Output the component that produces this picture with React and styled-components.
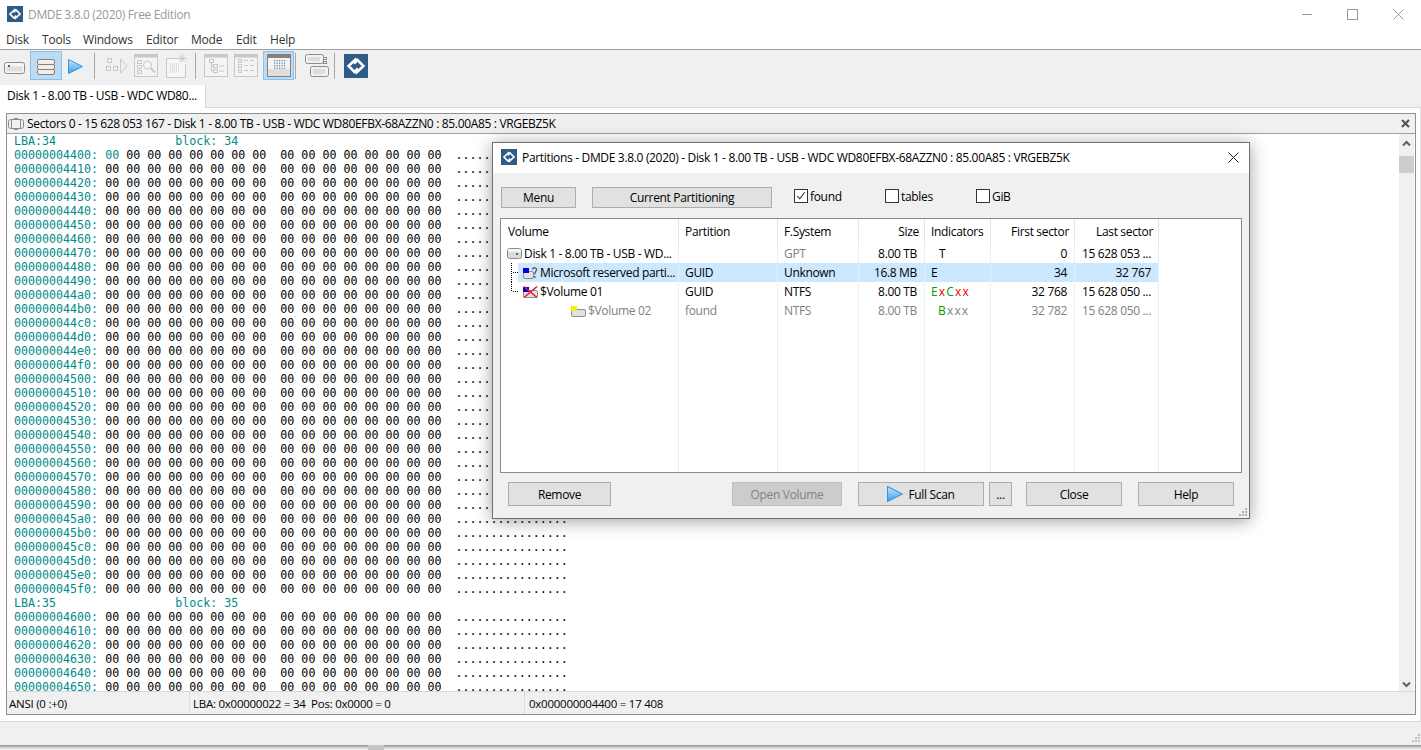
import React from 'react';
import styled, { createGlobalStyle } from 'styled-components';

const UI_FONT = '"Open Sans", "Noto Sans", "Liberation Sans", sans-serif';

const GlobalStyle = createGlobalStyle`
  html, body { margin: 0; padding: 0; background: #fff; }
  body { font-family: ${UI_FONT}; font-size: 12px; color: #000; }
`;

const Page = styled.div`
  position: relative;
  width: 1421px;
  height: 750px;
  overflow: hidden;
  display: flex;
  flex-direction: column;
  background: #fff;
  letter-spacing: -0.33px;
`;

const TitleBar = styled.div`
  height: 28px;
  display: flex;
  align-items: center;
  padding-left: 7px;
  gap: 5px;
  color: #999;
`;

const WindowButtons = styled.div`
  margin-left: auto;
  display: flex;
`;

const WindowButton = styled.div`
  width: 45.5px;
  height: 28px;
  display: flex;
  align-items: center;
  justify-content: center;
`;

const MenuBar = styled.div`
  height: 21px;
  box-sizing: border-box;
  padding: 2px 0 0 6px;
  display: flex;
  align-items: center;
  color: #333;
  letter-spacing: -0.2px;
`;

const MenuItem = styled.span`
  width: ${(p) => p.$w}px;
`;

const ToolBar = styled.div`
  height: 35px;
  border-top: 1px solid #a0a0a0;
  background: #f0f0f0;
  display: flex;
  align-items: flex-start;
  box-sizing: content-box;
  padding-left: 2px;
`;

const Tool = styled.div`
  width: ${(p) => p.$w}px;
  height: 29px;
  margin-top: 1px;
  padding-top: ${(p) => p.$shift || 0}px;
  box-sizing: border-box;
  display: flex;
  align-items: center;
  justify-content: center;
  ${(p) => p.$active && 'background: #bcdcf4; border: 1px solid #8cc0ea;'}
`;

const ToolSep = styled.div`
  width: 1px;
  height: 26px;
  margin: 3px ${(p) => p.$r}px 0 ${(p) => p.$l}px;
  background: #a8a8a8;
`;

const TabStrip = styled.div`
  height: 23px;
  background: #f0f0f0;
  border-bottom: 1px solid #d9d9d9;
  box-sizing: border-box;
  display: flex;
`;

const Tab = styled.div`
  width: 206px;
  height: 23px;
  background: #fff;
  border-right: 1px solid #d9d9d9;
  box-sizing: border-box;
  padding-left: 7px;
  line-height: 22px;
`;

const Workspace = styled.div`
  height: 613px;
  box-sizing: border-box;
  padding: 5px 4px 6px 6px;
  border-right: 1px solid #e2e2e2;
  display: flex;
`;

const Frame = styled.div`
  flex: 1;
  border: 1px solid #8f8f8f;
  display: flex;
  flex-direction: column;
  min-width: 0;
`;

const FrameHeader = styled.div`
  height: 20px;
  box-sizing: border-box;
  background: #f0f0f0;
  border-bottom: 1px solid #a0a0a0;
  display: flex;
  align-items: center;
  padding-left: 1px;
  gap: 3px;
`;

const FrameClose = styled.div`
  margin-left: auto;
  margin-right: 5px;
  display: flex;
`;

const FrameBody = styled.div`
  height: 557px;
  display: flex;
  overflow: hidden;
`;

const Hex = styled.div`
  flex: 1;
  overflow: hidden;
  padding-left: 7px;
  font-family: "DejaVu Sans Mono", "Liberation Mono", monospace;
  font-size: 11.65px;
  letter-spacing: 0;
  line-height: 14px;
  white-space: pre;
`;

const HexRow = styled.div`
  height: 14px;
`;

const Teal = styled.span`
  color: #008b8b;
`;

const ScrollBar = styled.div`
  width: 15px;
  margin-right: 1px;
  background: #f0f0f0;
  display: flex;
  flex-direction: column;
`;

const ScrollArrow = styled.div`
  height: ${(p) => p.$h}px;
  display: flex;
  align-items: ${(p) => (p.$down ? 'center' : 'flex-start')};
  justify-content: center;
  padding-top: ${(p) => (p.$down ? 0 : 6)}px;
  box-sizing: border-box;
`;

const ScrollThumb = styled.div`
  height: 17px;
  background: #cdcdcd;
`;

const ScrollSpace = styled.div`
  flex: 1;
`;

const FrameStatus = styled.div`
  flex: 1;
  background: #f0f0f0;
  border-top: 1px solid #d9d9d9;
  display: flex;
  align-items: center;
`;

const StatusCell = styled.div`
  width: ${(p) => p.$w}px;
  height: 100%;
  box-sizing: border-box;
  padding-left: ${(p) => p.$pad}px;
  display: flex;
  align-items: center;
  border-right: ${(p) => (p.$last ? 'none' : '1px solid #dcdcdc')};
  font-size: 11.5px;
  letter-spacing: -0.25px;
`;

const BottomBar = styled.div`
  height: 24px;
  border-top: 1px solid #d9d9d9;
  box-sizing: border-box;
  background: #f0f0f0;
  display: flex;
  justify-content: flex-end;
  align-items: flex-end;
  padding-bottom: 2px;
`;

const BottomShade = styled.div`
  flex: 1;
  background: linear-gradient(#8c8c8c, #dedede 60%, #f2f2f2);
  display: flex;
`;

const ShadeNotch = styled.div`
  width: 16px;
  margin-left: 368px;
  background: #c4c4c4;
`;

/* partitions window, floats over the hex view */
const Dialog = styled.div`
  position: absolute;
  left: 492px;
  top: 142px;
  width: 758px;
  height: 377px;
  box-sizing: border-box;
  border: 1px solid #6f6f6f;
  background: #f0f0f0;
  box-shadow: 0 2px 16px rgba(0, 0, 0, 0.38);
  display: flex;
  flex-direction: column;
`;

const DialogTitle = styled.div`
  height: 30px;
  box-sizing: border-box;
  padding: 0 0 2px 8px;
  background: #fff;
  display: flex;
  align-items: center;
  gap: 5px;
  flex-shrink: 0;
`;

const DialogClose = styled.div`
  margin-left: auto;
  margin-right: 10px;
  display: flex;
`;

const Options = styled.div`
  display: flex;
  align-items: flex-start;
  padding: 14px 0 10px 8px;
`;

const Button = styled.div`
  width: ${(p) => p.$w}px;
  height: ${(p) => p.$h || 24}px;
  margin-left: ${(p) => p.$ml || 0}px;
  box-sizing: border-box;
  border: 1px solid ${(p) => (p.$disabled ? '#bfbfbf' : '#adadad')};
  background: ${(p) => (p.$disabled ? '#cccccc' : '#e1e1e1')};
  color: ${(p) => (p.$disabled ? '#838383' : '#000')};
  display: flex;
  align-items: center;
  justify-content: center;
  gap: 5px;
`;

const CheckLabel = styled.label`
  width: ${(p) => p.$w}px;
  margin-left: ${(p) => p.$ml || 0}px;
  height: 18px;
  display: flex;
  align-items: center;
  gap: 2px;
`;

const Box = styled.span`
  width: 12px;
  height: 12px;
  border: 1px solid #333;
  background: #fff;
  display: flex;
`;

const List = styled.div`
  margin: 0 7px;
  height: 255px;
  box-sizing: border-box;
  border: 1px solid #8c8c8c;
  background: #fff;
  display: flex;
  flex-direction: column;
`;

const Row = styled.div`
  display: grid;
  grid-template-columns: 178px 99px 81px 66px 66px 84px 84px;
  height: ${(p) => p.$h}px;
  flex: ${(p) => (p.$fill ? 1 : 'none')};
  color: ${(p) => (p.$muted ? '#808080' : '#000')};
`;

const HeadCell = styled.div`
  border-right: 1px solid #e6e6e6;
  padding: 0 ${(p) => (p.$right ? 5 : 0)}px 0 ${(p) => (p.$right ? 0 : p.$pad || 6)}px;
  text-align: ${(p) => (p.$right ? 'right' : 'left')};
  line-height: 26px;
`;

const Cell = styled.div`
  border-right: 1px solid #e4f0fb;
  padding: 0 ${(p) => (p.$right ? 7 : 0)}px 0 ${(p) => (p.$right ? 0 : p.$pad || 6)}px;
  text-align: ${(p) => (p.$right ? 'right' : 'left')};
  line-height: 19px;
  color: ${(p) => (p.$muted ? '#808080' : 'inherit')};
  background: ${(p) => (p.$selected ? '#cce8ff' : 'transparent')};
  white-space: nowrap;
  overflow: hidden;
`;

const VolumeCell = styled.div`
  border-right: 1px solid #e4f0fb;
  padding-left: ${(p) => p.$indent}px;
  display: flex;
  align-items: stretch;
  line-height: 19px;
  white-space: nowrap;
  overflow: hidden;
`;

const VolumeLabel = styled.div`
  flex: 1;
  display: flex;
  align-items: center;
  gap: 2px;
  padding-left: ${(p) => p.$pad}px;
  background: ${(p) => (p.$selected ? '#cce8ff' : 'transparent')};
  overflow: hidden;
`;

const Flag = styled.span`
  color: ${(p) => p.$c};
  margin-right: 1.5px;
`;

const Footer = styled.div`
  display: flex;
  padding: 9px 0 0 15px;
`;

const Grip = styled.div`
  position: absolute;
  right: 1px;
  bottom: 1px;
  display: flex;
`;

const Logo = ({ size }) => (
  <svg width={size} height={size} viewBox="0 0 24 24">
    <rect width="24" height="24" fill="#2f5c86" />
    <path d="M12.5 4.5 L4.5 12 L10.5 18 L14 14.5" fill="none" stroke="#fff" strokeWidth="2.5" />
    <path d="M11.5 19.5 L19.5 12 L13.5 6 L10 9.5" fill="none" stroke="#fff" strokeWidth="2.5" />
  </svg>
);

const Play = ({ w = 15, h = 15, id }) => (
  <svg width={w} height={h} viewBox="0 0 15 15">
    <defs>
      <linearGradient id={id} x1="0" y1="0" x2="0" y2="1">
        <stop offset="0" stopColor="#c6e6fb" />
        <stop offset="1" stopColor="#3f9fe8" />
      </linearGradient>
    </defs>
    <path d="M0.5 0.5 L14.5 7.5 L0.5 14.5 Z" fill={`url(#${id})`} stroke="#2f97e6" />
  </svg>
);

const DriveTool = () => (
  <svg width="21" height="12" viewBox="0 0 21 12">
    <rect x="0.5" y="0.5" width="20" height="11" rx="2" fill="#f5f5f5" stroke="#8d8d8d" />
    <rect x="2.5" y="4.5" width="16" height="5" fill="#e2dede" />
    <rect x="4" y="3" width="2" height="2" fill="#0a9a2a" />
  </svg>
);

const StackTool = () => (
  <svg width="18" height="16" viewBox="0 0 18 16">
    {[0.5, 5.5, 10.5].map((y) => (
      <rect key={y} x="0.5" y={y} width="17" height="5" rx="1.5" fill="#f4eeea" stroke="#8a7f7a" />
    ))}
  </svg>
);

const ScanTool = () => (
  <svg width="22" height="16" viewBox="0 0 22 16" fill="none" stroke="#c8c8c8">
    <rect x="1.5" y="0.5" width="4" height="4" />
    <rect x="0.5" y="8.5" width="4" height="4" />
    <rect x="7.5" y="8.5" width="4" height="4" />
    <path d="M14.5 1 L21 8 L14.5 15 Z" />
  </svg>
);

const SearchTool = () => (
  <svg width="24" height="23" viewBox="0 0 24 23" fill="none" stroke="#c8c8c8">
    <rect x="0.5" y="0.5" width="23" height="22" fill="#f4f4f4" />
    <rect x="1" y="1" width="22" height="2" fill="#c8c8c8" />
    <rect x="3.5" y="6.5" width="4" height="3" />
    <rect x="3.5" y="11.5" width="4" height="3" />
    <rect x="3.5" y="16.5" width="4" height="3" />
    <circle cx="13.5" cy="11" r="4" />
    <path d="M16.5 14 L21 18.5" strokeWidth="2" />
  </svg>
);

const NewTool = () => (
  <svg width="22" height="24" viewBox="0 0 22 24" fill="none" stroke="#c8c8c8">
    <path d="M15 4.5 H0.5 V23.5 H19.5 V10" fill="#f6f6f6" />
    <path d="M16 0 V9 M11.5 4.5 H20.5 M13 1.5 L19 7.5 M19 1.5 L13 7.5" />
    <path d="M4 10 H14 M4 12 H14 M4 14 H14 M4 16 H14 M4 18 H12" stroke="#c4c4c4" strokeDasharray="1 1" />
  </svg>
);

const TreeTool = () => (
  <svg width="24" height="23" viewBox="0 0 24 23" fill="none" stroke="#c8c8c8">
    <rect x="0.5" y="0.5" width="23" height="22" fill="#f4f4f4" />
    <rect x="1" y="1" width="22" height="2" fill="#c8c8c8" />
    <rect x="5.5" y="5.5" width="4" height="3" />
    <rect x="9.5" y="10.5" width="4" height="3" />
    <rect x="9.5" y="15.5" width="4" height="3" />
    <path d="M7.5 8.5 V17 H9.5 M7.5 12 H9.5 M15 12 H20 M15 17 H20" />
  </svg>
);

const ListTool = () => (
  <svg width="24" height="23" viewBox="0 0 24 23" fill="none" stroke="#c8c8c8">
    <rect x="0.5" y="0.5" width="23" height="22" fill="#f4f4f4" />
    <rect x="1" y="1" width="22" height="2" fill="#c8c8c8" />
    {[6.5, 11.5, 16.5].map((y) => (
      <g key={y}>
        <rect x="4.5" y={y - 1} width="3" height="3" />
        <path d={`M10 ${y} H14 M16 ${y} H20`} />
      </g>
    ))}
  </svg>
);

const HexTool = () => (
  <svg width="24" height="23" viewBox="0 0 24 23">
    <rect x="0.5" y="0.5" width="23" height="22" fill="#f6f4f3" stroke="#8a7f7a" />
    <rect x="1" y="1" width="22" height="3" fill="#8a7f7a" />
    <rect x="1" y="15" width="22" height="7" fill="#e2dcdc" />
    {[6, 8.5, 11, 13.5].map((y, r) =>
      [7, 9.5, 12, 14.5, 17].map((x, c) => (
        <rect key={`${x}-${y}`} x={x} y={y} width="1.2" height="1.2" fill={(r + c) % 2 ? '#3d8fb0' : '#777'} />
      ))
    )}
  </svg>
);

const PanelsTool = () => (
  <svg width="24" height="23" viewBox="0 0 24 23" fill="none" stroke="#8c8c8c">
    <rect x="0.5" y="0.5" width="18" height="9" rx="2" fill="#f2f2f2" />
    <rect x="5.5" y="12.5" width="18" height="10" rx="2" fill="#f2f2f2" />
    <rect x="3" y="3" width="12" height="4" fill="#dcdcdc" stroke="none" />
    <rect x="8" y="15" width="12" height="5" fill="#dcdcdc" stroke="none" />
    <rect x="18.5" y="3.5" width="3" height="2" fill="#fff" />
    <rect x="18.5" y="7.5" width="3" height="2" fill="#fff" />
  </svg>
);

const SmallDisk = () => (
  <svg width="15" height="11" viewBox="0 0 15 11">
    <rect x="0.5" y="0.5" width="14" height="10" rx="2" fill="#dcdcdc" stroke="#8d8d8d" />
    <rect x="1" y="1" width="13" height="3" rx="1" fill="#f4f4f4" />
    <rect x="9" y="5" width="2" height="2" fill="#0a9a2a" />
  </svg>
);

const VolumeIcon = ({ color, question, crossed }) => (
  <svg width="15" height="12" viewBox="0 0 15 12">
    <rect x="0.5" y="4.5" width={question ? 10 : 14} height="7" rx="1.5" fill="#e2e2e2" stroke="#8d8d8d" />
    <rect x="0" y="1" width="6" height="5" fill={color} />
    {question && (
      <path d="M9.5 2.5 Q10 0.5 12 0.8 Q14.5 1.5 13 4 Q11.8 5.2 11.8 7.5 M11.8 9 V11" fill="none" stroke="#5f5f5f" strokeWidth="1.4" />
    )}
    {crossed && <path d="M1 0.5 L14 11.5 M14 0.5 L1 11.5" stroke="#ec1c24" strokeWidth="1.5" />}
  </svg>
);

const TreeGuide = ({ half }) => (
  <svg width="7" height="19" viewBox="0 0 7 19">
    <path d={`M0.5 0 V${half ? 10 : 19} M2 9.5 H7`} stroke="#000" strokeDasharray="1 1" fill="none" />
  </svg>
);

const GripDots = ({ fill }) => (
  <svg width="9" height="9" viewBox="0 0 9 9" fill={fill}>
    <rect x="6" y="0" width="2" height="2" />
    <rect x="3" y="3" width="2" height="2" />
    <rect x="6" y="3" width="2" height="2" />
    <rect x="0" y="6" width="2" height="2" />
    <rect x="3" y="6" width="2" height="2" />
    <rect x="6" y="6" width="2" height="2" />
  </svg>
);

const hexOffsets = (from, count) =>
  Array.from({ length: count }, (_, i) => (from + i * 16).toString(16).padStart(11, '0'));

const BYTES = '00 00 00 00 00 00 00 00  00 00 00 00 00 00 00 00';

const HexLine = ({ offset, first }) => (
  <HexRow>
    <Teal>{offset}:</Teal>{' '}
    {first ? <Teal>00</Teal> : '00'}
    {BYTES.slice(2)}{'  ................'}
  </HexRow>
);

const Indicators = ({ flags }) => flags.map(([ch, c], i) => <Flag key={i} $c={c}>{ch}</Flag>);

const GREEN = '#00a000';
const RED = '#f00000';
const GREY = '#808080';

const columnsRight = [false, false, false, true, false, true, true];
const headers = ['Volume', 'Partition', 'F.System', 'Size', 'Indicators', 'First sector', 'Last sector'];

const App = () => (
  <Page>
    <GlobalStyle />
    <TitleBar>
      <Logo size={16} />
      <span>DMDE 3.8.0 (2020) Free Edition</span>
      <WindowButtons>
        <WindowButton>
          <svg width="11" height="11" viewBox="0 0 11 11"><path d="M0 5.5 H10" stroke="#999" /></svg>
        </WindowButton>
        <WindowButton>
          <svg width="11" height="11" viewBox="0 0 11 11"><rect x="0.5" y="0.5" width="10" height="10" fill="none" stroke="#999" /></svg>
        </WindowButton>
        <WindowButton>
          <svg width="11" height="11" viewBox="0 0 11 11"><path d="M0.5 0.5 L10.5 10.5 M10.5 0.5 L0.5 10.5" stroke="#999" /></svg>
        </WindowButton>
      </WindowButtons>
    </TitleBar>
    <MenuBar>
      <MenuItem $w={36}>Disk</MenuItem>
      <MenuItem $w={41}>Tools</MenuItem>
      <MenuItem $w={63}>Windows</MenuItem>
      <MenuItem $w={45}>Editor</MenuItem>
      <MenuItem $w={45}>Mode</MenuItem>
      <MenuItem $w={34}>Edit</MenuItem>
      <MenuItem $w={40}>Help</MenuItem>
    </MenuBar>
    <ToolBar>
      <Tool $w={24} $shift={5}><DriveTool /></Tool>
      <Tool $w={4} />
      <Tool $w={32} $active $shift={2}><StackTool /></Tool>
      <Tool $w={26} $shift={2}><Play id="toolPlay" /></Tool>
      <ToolSep $l={6} $r={9} />
      <Tool $w={26}><ScanTool /></Tool>
      <Tool $w={31}><SearchTool /></Tool>
      <Tool $w={31}><NewTool /></Tool>
      <ToolSep $l={3} $r={7} />
      <Tool $w={26}><TreeTool /></Tool>
      <Tool $w={34}><ListTool /></Tool>
      <Tool $w={31} $active><HexTool /></Tool>
      <ToolSep $l={1} $r={8} />
      <Tool $w={26}><PanelsTool /></Tool>
      <ToolSep $l={4} $r={9} />
      <Tool $w={24}><Logo size={24} /></Tool>
    </ToolBar>
    <TabStrip>
      <Tab>Disk 1 - 8.00 TB - USB - WDC WD80...</Tab>
    </TabStrip>
    <Workspace>
      <Frame>
        <FrameHeader>
          <svg width="16" height="12" viewBox="0 0 16 12" fill="none" stroke="#8c8c8c">
            <rect x="0.5" y="1.5" width="15" height="9" rx="2" />
            <path d="M3.5 1 V11 M12.5 1 V11 M6 0.5 H10 M6 11.5 H10" />
          </svg>
          <span>Sectors 0 - 15 628 053 167 - Disk 1 - 8.00 TB - USB - WDC WD80EFBX-68AZZN0 : 85.00A85 : VRGEBZ5K</span>
          <FrameClose>
            <svg width="9" height="9" viewBox="0 0 9 9"><path d="M1 1 L8 8 M8 1 L1 8" stroke="#555" strokeWidth="2.2" /></svg>
          </FrameClose>
        </FrameHeader>
        <FrameBody>
          <Hex>
            <HexRow><Teal>{'LBA:34                 block: 34'}</Teal></HexRow>
            {hexOffsets(0x4400, 32).map((o, i) => <HexLine key={o} offset={o} first={i === 0} />)}
            <HexRow><Teal>{'LBA:35                 block: 35'}</Teal></HexRow>
            {hexOffsets(0x4600, 6).map((o) => <HexLine key={o} offset={o} />)}
          </Hex>
          <ScrollBar>
            <ScrollArrow $h={22}>
              <svg width="9" height="7" viewBox="0 0 9 7"><path d="M1 5.5 L4.5 2 L8 5.5" fill="none" stroke="#606060" strokeWidth="2" /></svg>
            </ScrollArrow>
            <ScrollThumb />
            <ScrollSpace />
            <ScrollArrow $h={14} $down>
              <svg width="9" height="7" viewBox="0 0 9 7"><path d="M1 1.5 L4.5 5 L8 1.5" fill="none" stroke="#606060" strokeWidth="2" /></svg>
            </ScrollArrow>
          </ScrollBar>
        </FrameBody>
        <FrameStatus>
          <StatusCell $w={183} $pad={2}>ANSI (0 :+0)</StatusCell>
          <StatusCell $w={335} $pad={3}>LBA: 0x00000022 = 34&nbsp;&nbsp;Pos: 0x0000 = 0</StatusCell>
          <StatusCell $w={200} $pad={4} $last>0x000000004400 = 17 408</StatusCell>
        </FrameStatus>
      </Frame>
    </Workspace>
    <BottomBar>
      <GripDots fill="#bdbdbd" />
    </BottomBar>
    <BottomShade><ShadeNotch /></BottomShade>

    <Dialog>
      <DialogTitle>
        <Logo size={16} />
        <span>Partitions - DMDE 3.8.0 (2020) - Disk 1 - 8.00 TB - USB - WDC WD80EFBX-68AZZN0 : 85.00A85 : VRGEBZ5K</span>
        <DialogClose>
          <svg width="11" height="11" viewBox="0 0 11 11"><path d="M0.5 0.5 L10.5 10.5 M10.5 0.5 L0.5 10.5" stroke="#222" /></svg>
        </DialogClose>
      </DialogTitle>
      <Options>
        <Button $w={75} $h={21}>Menu</Button>
        <Button $w={180} $h={21} $ml={16}>Current Partitioning</Button>
        <CheckLabel $w={91} $ml={22}>
          <Box>
            <svg width="12" height="12" viewBox="0 0 13 13"><path d="M2.5 6.5 L5.2 9.5 L10.5 2.5" fill="none" stroke="#222" strokeWidth="1.1" /></svg>
          </Box>
          found
        </CheckLabel>
        <CheckLabel $w={91}><Box />tables</CheckLabel>
        <CheckLabel $w={60}><Box />GiB</CheckLabel>
      </Options>
      <List>
        <Row $h={25}>
          {headers.map((h, i) => <HeadCell key={h} $right={columnsRight[i]} $pad={i === 0 ? 7 : 6}>{h}</HeadCell>)}
        </Row>
        <Row $h={19}>
          <VolumeCell $indent={6}>
            <VolumeLabel $pad={0}><SmallDisk />Disk 1 - 8.00 TB - USB - WD...</VolumeLabel>
          </VolumeCell>
          <Cell />
          <Cell $muted>GPT</Cell>
          <Cell $right>8.00 TB</Cell>
          <Cell $pad={14}>T</Cell>
          <Cell $right>0</Cell>
          <Cell $right>15 628 053 ...</Cell>
        </Row>
        <Row $h={19}>
          <VolumeCell $indent={10}>
            <TreeGuide />
            <VolumeLabel $pad={5} $selected><VolumeIcon color="#0000e0" question />Microsoft reserved parti...</VolumeLabel>
          </VolumeCell>
          <Cell $selected>GUID</Cell>
          <Cell $selected>Unknown</Cell>
          <Cell $right $selected>16.8 MB</Cell>
          <Cell $selected>E</Cell>
          <Cell $right $selected>34</Cell>
          <Cell $right $selected>32 767</Cell>
        </Row>
        <Row $h={19}>
          <VolumeCell $indent={10}>
            <TreeGuide half />
            <VolumeLabel $pad={5}><VolumeIcon color="#0000e0" crossed />$Volume 01</VolumeLabel>
          </VolumeCell>
          <Cell>GUID</Cell>
          <Cell>NTFS</Cell>
          <Cell $right>8.00 TB</Cell>
          <Cell><Indicators flags={[['E', GREEN], ['x', RED], ['C', GREEN], ['x', RED], ['x', RED]]} /></Cell>
          <Cell $right>32 768</Cell>
          <Cell $right>15 628 050 ...</Cell>
        </Row>
        <Row $h={19} $muted>
          <VolumeCell $indent={70}>
            <VolumeLabel $pad={0}><VolumeIcon color="#f4f000" />$Volume 02</VolumeLabel>
          </VolumeCell>
          <Cell>found</Cell>
          <Cell>NTFS</Cell>
          <Cell $right>8.00 TB</Cell>
          <Cell $pad={13}><Indicators flags={[['B', GREEN], ['x', GREY], ['x', GREY], ['x', GREY]]} /></Cell>
          <Cell $right>32 782</Cell>
          <Cell $right>15 628 050 ...</Cell>
        </Row>
        <Row $h={0} $fill>
          {headers.map((h) => <Cell key={h} />)}
        </Row>
      </List>
      <Footer>
        <Button $w={103}>Remove</Button>
        <Button $w={110} $ml={121} $disabled>Open Volume</Button>
        <Button $w={126} $ml={16}><Play w={16} h={16} id="scanPlay" />Full Scan</Button>
        <Button $w={23} $ml={5}>...</Button>
        <Button $w={96} $ml={14}>Close</Button>
        <Button $w={96} $ml={16}>Help</Button>
      </Footer>
      <Grip>
        <GripDots fill="#b0b0b0" />
      </Grip>
    </Dialog>
  </Page>
);

export default App;
